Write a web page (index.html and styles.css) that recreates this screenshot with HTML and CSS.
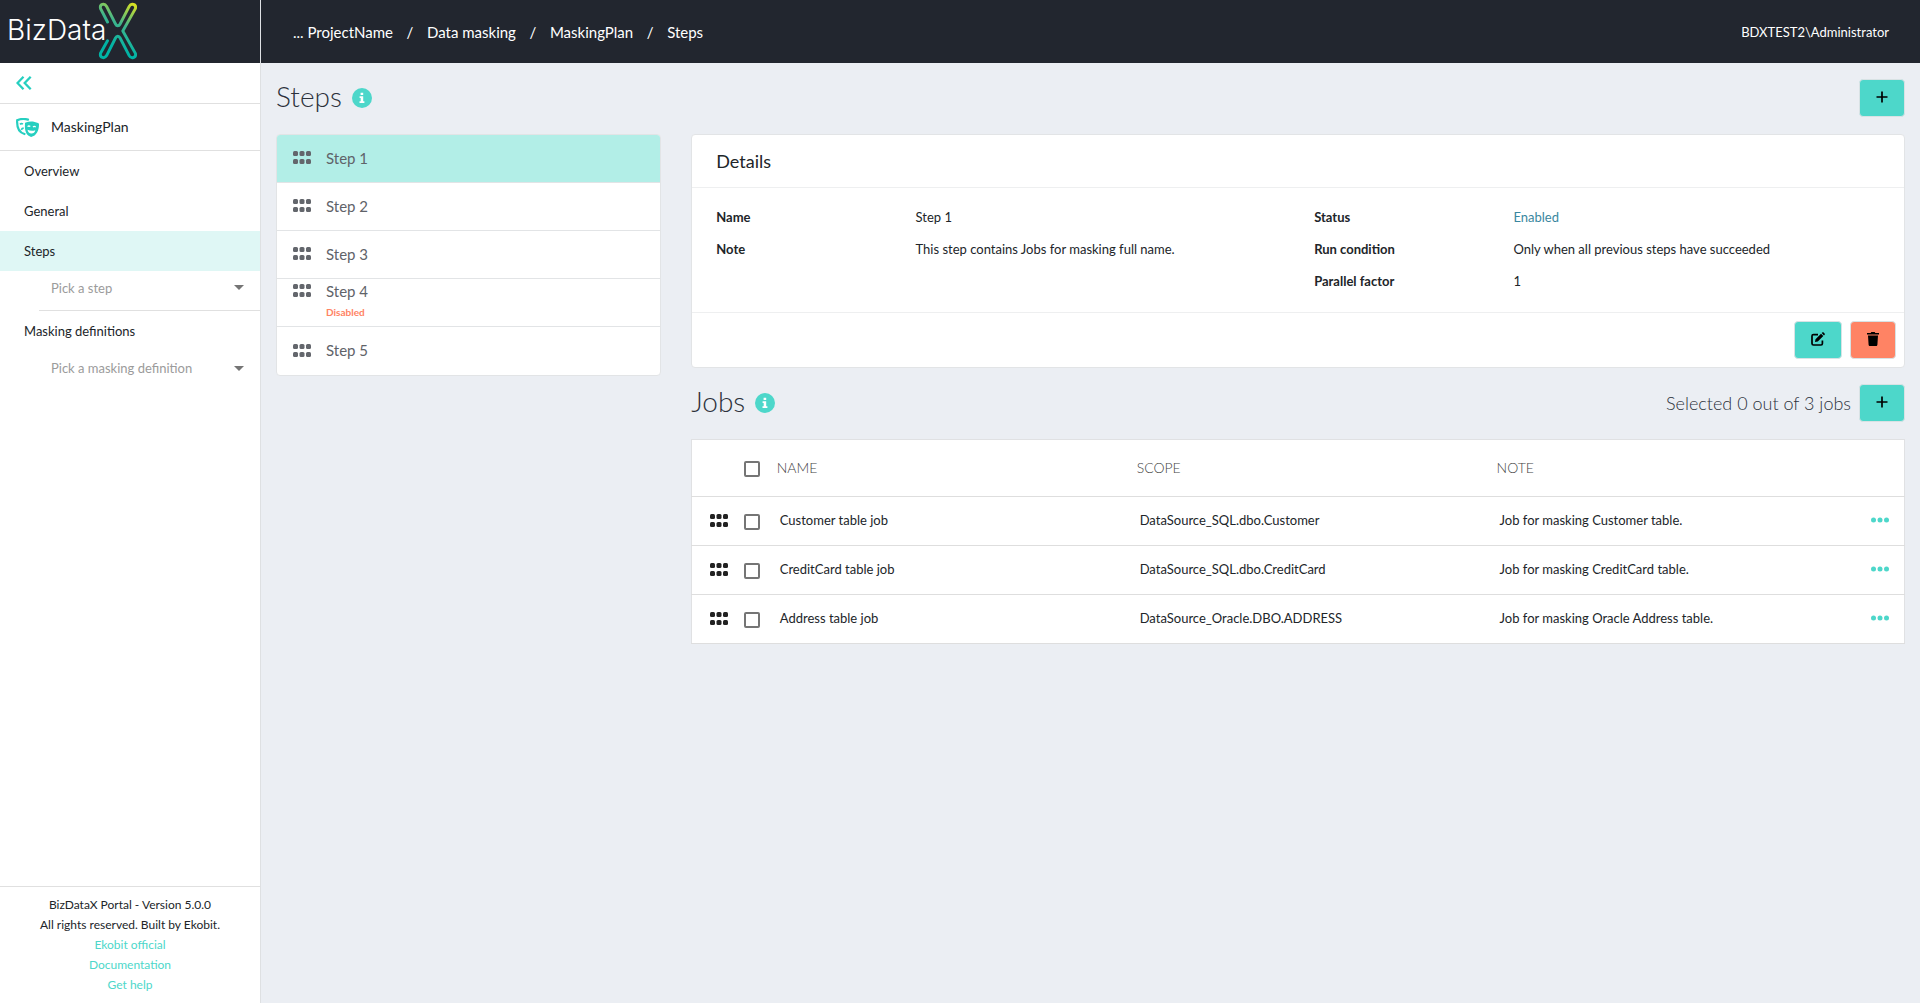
FILE: index.html
```html
<!DOCTYPE html>
<html lang="en">
<head>
<meta charset="utf-8">
<title>Steps - BizDataX Portal</title>
<link rel="stylesheet" href="styles.css">
</head>
<body>
<svg class="sprite" aria-hidden="true">
  <symbol id="grip" viewBox="0 0 18 13">
    <rect x="0" y="0" width="5" height="5" rx="1.5"/><rect x="6.500" y="0" width="5" height="5" rx="1.5"/><rect x="13" y="0" width="5" height="5" rx="1.5"/>
    <rect x="0" y="8" width="5" height="5" rx="1.5"/><rect x="6.500" y="8" width="5" height="5" rx="1.5"/><rect x="13" y="8" width="5" height="5" rx="1.5"/>
  </symbol>
  <symbol id="info" viewBox="0 0 20 20">
    <circle cx="10" cy="10" r="10" fill="#4dd7ca"/>
    <path d="M8.600 4.800h2.600v2.300H8.600zM7.600 8.300h3.600v5h1.200V15H7.500v-1.700h1.200V10H7.600z" fill="#fff"/>
  </symbol>
  <symbol id="plus" viewBox="0 0 12 12"><path d="M6 .5v11M.5 6h11" stroke="#000" stroke-width="1.700" fill="none"/></symbol>
  <symbol id="dots" viewBox="0 0 18 6"><circle cx="2.500" cy="3" r="2.500"/><circle cx="9" cy="3" r="2.500"/><circle cx="15.500" cy="3" r="2.500"/></symbol>
  <symbol id="caret" viewBox="0 0 10 5"><path d="M0 0h10L5 5z"/></symbol>
</svg>

<header class="topbar">
  <a class="logo" href="#" aria-label="BizDataX">
    <span class="logo-text">BizData</span>
    <svg class="logo-x" viewBox="0 0 40 58" width="40" height="58" aria-hidden="true">
      <defs>
        <linearGradient id="xg" gradientUnits="userSpaceOnUse" x1="36" y1="2" x2="14" y2="44">
          <stop offset="0" stop-color="#d9e021"/><stop offset=".5" stop-color="#3fb58c"/><stop offset="1" stop-color="#00b3a6"/>
        </linearGradient>
      </defs>
      <g fill="none" stroke="url(#xg)" stroke-width="2.900" stroke-linecap="round" stroke-linejoin="round">
        <path d="M9.500 20 2.500 6.500C1.500 2 6.500.8 8.600 4.400L17.500 22c1.200 2.400 3.400 2.400 4.600 0L31.200 4.400c2-3.600 7.300-2.200 6.200 2.200L24.800 29 37.400 51.400c1.100 4.400-4.200 5.800-6.200 2.200L22.100 36c-1.200-2.400-3.400-2.400-4.600 0L8.600 53.600c-2.100 3.600-7.100 2.200-6.100-2.300l7-12.500"/>
      </g>
    </svg>
  </a>
  <nav class="crumbs" aria-label="Breadcrumb">
    <a href="#">... ProjectName</a><span>/</span><a href="#">Data masking</a><span>/</span><a href="#">MaskingPlan</a><span>/</span><a href="#">Steps</a>
  </nav>
  <a class="user" href="#">BDXTEST2\Administrator</a>
</header>

<div class="shell">
  <aside class="sidebar">
    <button class="collapse" type="button" aria-label="Collapse menu">
      <svg width="16" height="14" viewBox="0 0 16 14"><path d="M7.500 .8 1.500 7l6 6.200M14.700 .8 8.700 7l6 6.200" fill="none" stroke="#26cfc0" stroke-width="2.300"/></svg>
    </button>
    <div class="plan">
      <svg width="23" height="19" viewBox="0 0 23 19" aria-hidden="true">
        <path d="M1.200 2.200C4.500.8 8 .4 12 1.600M1.200 2.200C.8 8 1.600 14 8.500 16" fill="none" stroke="#26cfc0" stroke-width="2.200" stroke-linecap="round"/>
        <path d="M4 6.400c.9-1 2-1 2.900-.3M5.300 11.800c.5-1 1.300-1.500 2.400-1.600" fill="none" stroke="#26cfc0" stroke-width="1.700"/>
        <path d="M9.700 4.600c4-1.700 8.400-1.400 12.300.5.700.3 1 .8 1 1.500 0 6-2.500 11.400-7.900 12.400-4.500-1-6.100-5.500-6.200-9.900 0-1.300 0-2.500.1-3.600 0-.5.300-.8.700-.9z" fill="#26cfc0"/>
        <path d="M11.600 8.600c.8-.8 1.800-.8 2.700 0M17 9c.9-.8 1.900-.7 2.700.1" fill="none" stroke="#fff" stroke-width="1.300"/>
        <path d="M11.500 11.800c2.500 1.200 5.300 1.400 7.800.5-.5 2.200-2 3.400-4 3.300-2-.2-3.400-1.600-3.800-3.800z" fill="#fff"/>
      </svg>
      <span>MaskingPlan</span>
    </div>
    <nav class="menu">
      <a href="#">Overview</a>
      <a href="#">General</a>
      <a href="#" class="active" aria-current="page">Steps</a>
      <div class="pick pick-line">
        <select aria-label="Pick a step"><option>Pick a step</option></select>
        <svg width="10" height="5" aria-hidden="true"><use href="#caret"/></svg>
      </div>
      <a href="#">Masking definitions</a>
      <div class="pick">
        <select aria-label="Pick a masking definition"><option>Pick a masking definition</option></select>
        <svg width="10" height="5" aria-hidden="true"><use href="#caret"/></svg>
      </div>
    </nav>
    <footer class="about">
      <span>BizDataX Portal - Version 5.0.0</span>
      <span>All rights reserved. Built by Ekobit.</span>
      <a href="#">Ekobit official</a>
      <a href="#">Documentation</a>
      <a href="#">Get help</a>
    </footer>
  </aside>

  <main class="main">
    <div class="titlebar">
      <h1>Steps</h1>
      <svg width="20" height="20" role="img" aria-label="Info"><use href="#info"/></svg>
      <button class="btn push" type="button" aria-label="Add step"><svg width="12" height="12"><use href="#plus"/></svg></button>
    </div>

    <div class="columns">
      <ul class="steps">
        <li class="selected"><svg width="18" height="13"><use href="#grip"/></svg><span>Step 1</span></li>
        <li><svg width="18" height="13"><use href="#grip"/></svg><span>Step 2</span></li>
        <li><svg width="18" height="13"><use href="#grip"/></svg><span>Step 3</span></li>
        <li><svg width="18" height="13"><use href="#grip"/></svg><span>Step 4</span><small>Disabled</small></li>
        <li><svg width="18" height="13"><use href="#grip"/></svg><span>Step 5</span></li>
      </ul>

      <div class="content">
        <section class="card">
          <h2>Details</h2>
          <div class="facts">
            <dl>
              <dt>Name</dt><dd>Step 1</dd>
              <dt>Note</dt><dd>This step contains Jobs for masking full name.</dd>
            </dl>
            <dl>
              <dt>Status</dt><dd class="enabled">Enabled</dd>
              <dt>Run condition</dt><dd>Only when all previous steps have succeeded</dd>
              <dt>Parallel factor</dt><dd>1</dd>
            </dl>
          </div>
          <div class="actions">
            <button class="btn wide" type="button" aria-label="Edit step">
              <svg width="14" height="14" viewBox="0 0 14 14"><path d="M7 2.600H2.500C1.500 2.600 1 3.100 1 4v7.600C1 12.500 1.500 13 2.500 13H10c.9 0 1.400-.5 1.400-1.400V8.400" fill="none" stroke="#000" stroke-width="1.700"/><path d="M10 1.800 12.300 4.100 6.800 9.600 4 10.100l.5-2.800zM10.700 1.100l.6-.6c.4-.4.900-.4 1.300 0l1 1c.4.400.4.900 0 1.300l-.6.600z"/></svg>
            </button>
            <button class="btn danger" type="button" aria-label="Delete step">
              <svg width="12" height="14" viewBox="0 0 12 14"><path d="M0 1h3.700l.6-1h3.400l.6 1H12v1.500H0zM1 3.400h10l-.6 9.300c-.1.800-.6 1.300-1.300 1.300H2.900c-.7 0-1.200-.5-1.300-1.300z"/></svg>
            </button>
          </div>
        </section>

        <div class="titlebar jobs-title">
          <h1>Jobs</h1>
          <svg width="20" height="20" role="img" aria-label="Info"><use href="#info"/></svg>
          <span class="count push">Selected 0 out of 3 jobs</span>
          <button class="btn" type="button" aria-label="Add job"><svg width="12" height="12"><use href="#plus"/></svg></button>
        </div>

        <table class="jobs">
          <thead>
            <tr><th class="c-grip"></th><th class="c-check"><input type="checkbox" aria-label="Select all jobs"></th><th>NAME</th><th>SCOPE</th><th>NOTE</th><th class="c-more"></th></tr>
          </thead>
          <tbody>
            <tr><td class="c-grip"><svg width="18" height="13"><use href="#grip"/></svg></td><td class="c-check"><input type="checkbox" aria-label="Select Customer table job"></td><td>Customer table job</td><td>DataSource_SQL.dbo.Customer</td><td>Job for masking Customer table.</td><td class="c-more"><button type="button" aria-label="More"><svg width="18" height="6"><use href="#dots"/></svg></button></td></tr>
            <tr><td class="c-grip"><svg width="18" height="13"><use href="#grip"/></svg></td><td class="c-check"><input type="checkbox" aria-label="Select CreditCard table job"></td><td>CreditCard table job</td><td>DataSource_SQL.dbo.CreditCard</td><td>Job for masking CreditCard table.</td><td class="c-more"><button type="button" aria-label="More"><svg width="18" height="6"><use href="#dots"/></svg></button></td></tr>
            <tr><td class="c-grip"><svg width="18" height="13"><use href="#grip"/></svg></td><td class="c-check"><input type="checkbox" aria-label="Select Address table job"></td><td>Address table job</td><td>DataSource_Oracle.DBO.ADDRESS</td><td>Job for masking Oracle Address table.</td><td class="c-more"><button type="button" aria-label="More"><svg width="18" height="6"><use href="#dots"/></svg></button></td></tr>
          </tbody>
        </table>
      </div>
    </div>
  </main>
</div>
</body>
</html>
```
FILE: styles.css
```css
* { box-sizing: border-box; }

body {
  margin: 0;
  min-height: 100vh;
  display: flex;
  flex-direction: column;
  font: 13px/20px Lato, "Liberation Sans", sans-serif;
  color: #212529;
  background: #ebeef3;
}

svg { display: block; flex: none; }
a { color: inherit; text-decoration: none; }
button { font: inherit; cursor: pointer; }
.sprite { display: none; }
.push { margin-left: auto; }

/* Top bar */
.topbar {
  display: flex;
  align-items: center;
  height: 63px;
  background: #22262f;
  color: #fff;
}
.logo {
  display: flex;
  align-items: center;
  width: 261px;
  height: 63px;
  padding: 0 0 2px 7px;
  border-right: 1px solid #dfe1e5;
}
.logo-text { font: 300 28px/32px Inter, sans-serif; padding-bottom: 2px; }
.logo-x { margin-left: -8px; }
.crumbs { display: flex; padding-left: 32px; font-size: 15px; }
.crumbs span { width: 34px; text-align: center; }
.user { margin-left: auto; padding-right: 31px; }

/* Sidebar */
.shell { display: flex; flex: 1; }
.sidebar {
  display: flex;
  flex-direction: column;
  flex: none;
  width: 261px;
  background: #fff;
  border-right: 1px solid #dee0e2;
}
.collapse {
  display: flex;
  align-items: center;
  height: 41px;
  padding: 0 16px;
  border: 0;
  border-bottom: 1px solid #e0e0e0;
  background: none;
}
.plan {
  display: flex;
  align-items: center;
  gap: 12px;
  height: 47px;
  padding-left: 16px;
  border-bottom: 1px solid #e0e0e0;
  font-size: 14px;
}
.menu { display: flex; flex-direction: column; }
.menu a { padding: 10px 24px; }
.menu .active { background: #dff7f5; }
.pick {
  display: grid;
  align-items: center;
  height: 40px;
  margin-left: 39px;
  padding: 0 16px 6px 12px;
}
.pick-line { border-bottom: 1px solid #e0e0e0; }
.pick select, .pick svg { grid-area: 1 / 1; }
.pick svg { justify-self: end; fill: #757575; pointer-events: none; }
.pick select {
  appearance: none;
  border: 0;
  padding: 0;
  background: none;
  font: inherit;
  color: #9b9b9b;
}
.about {
  display: flex;
  flex-direction: column;
  align-items: center;
  margin-top: auto;
  padding: 8px 0;
  border-top: 1px solid #e0e0e0;
  font-size: 12px;
}
.about a { color: #4dd7ca; }

/* Page titles and buttons */
.main { flex: 1; min-width: 0; padding: 16px 15px; }
.titlebar { display: flex; align-items: center; height: 38px; }
.titlebar h1 {
  margin: 0 10px 0 0;
  padding-bottom: 4px;
  font-size: 28px;
  line-height: 34px;
  font-weight: 300;
  color: #2c313b;
}
.btn {
  display: flex;
  align-items: center;
  justify-content: center;
  width: 46px;
  height: 38px;
  padding: 0 0 3px;
  border: 1px solid #d8e2e4;
  border-radius: 4px;
  background: #4dd7ca;
}
.wide { width: 48px; }
.danger { background: #ff8364; }
.count { margin-right: 8px; font-size: 18px; font-weight: 300; color: #2c313b; }
.jobs-title { margin: 16px 0 17px; }

.columns {
  display: grid;
  grid-template-columns: calc(25% - 22px) 1fr;
  gap: 30px;
  align-items: start;
  padding-top: 17px;
}

/* Step list */
.steps {
  margin: 0;
  padding: 0;
  list-style: none;
  border: 1px solid #e2e4e6;
  border-radius: 4px;
  background: #fff;
  overflow: hidden;
  font-size: 15px;
  color: #5f6369;
}
.steps li {
  display: grid;
  grid-template-columns: 18px 1fr;
  column-gap: 15px;
  align-content: center;
  align-items: center;
  height: 48px;
  padding: 0 16px 2px;
  border-bottom: 1px solid #e2e4e6;
}
.steps li:last-child { border-bottom: 0; }
.steps .selected { background: #b2eee7; }
.steps svg { fill: #63666c; }
.steps small { grid-column: 2; line-height: 22px; font-size: 10px; font-weight: 700; color: #ff8364; }

/* Details card */
.card { background: #fff; border: 1px solid #e2e4e6; border-radius: 4px; }
.card h2 {
  margin: 0;
  padding: 16px 24px;
  border-bottom: 1px solid #eeeff0;
  font-size: 18px;
  line-height: 20px;
  font-weight: 400;
}
.facts {
  display: grid;
  grid-template-columns: 1fr 1fr;
  margin-right: -8px;
  padding: 13px 0 15px 24px;
}
.facts dl {
  display: grid;
  grid-template-columns: 1fr 2fr;
  align-content: start;
  margin: 0;
  line-height: 32px;
}
.facts dt { font-weight: 700; }
.facts dd { margin: 0; }
.facts .enabled { color: #3a87a0; }
.actions {
  display: flex;
  justify-content: flex-end;
  gap: 8px;
  padding: 8px;
  border-top: 1px solid #eeeff0;
}

/* Jobs table */
.jobs {
  width: 100%;
  table-layout: fixed;
  border: 1px solid #e0e1e3;
  border-collapse: collapse;
  background: #fff;
}
.jobs tr { border-bottom: 1px solid #dedede; }
.jobs th {
  height: 57px;
  padding: 0;
  font-size: 14px;
  font-weight: 300;
  text-align: left;
  color: #444;
}
.jobs td { height: 49px; padding: 0 3px 2px; }
.jobs .c-grip { width: 52px; padding-left: 18px; fill: #212121; }
.jobs .c-check { width: 33px; padding: 1px 0 0; }
.jobs .c-more { width: 48px; padding: 0 0 2px; }
.jobs .c-more button { display: block; margin: 0 auto; padding: 4px 0; border: 0; background: none; fill: #4dd7ca; }
.jobs input {
  appearance: none;
  display: block;
  width: 16px;
  height: 16px;
  margin: 0;
  border: 2px solid #757575;
  border-radius: 2px;
}
```
